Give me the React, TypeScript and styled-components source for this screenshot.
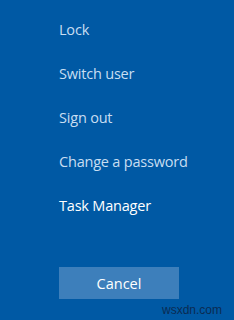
import React from "react";
import styled, { createGlobalStyle } from "styled-components";

const Global = createGlobalStyle`
  html, body { margin: 0; padding: 0; }
  body { background: #0059a4; width: 234px; height: 320px; overflow: hidden; }
`;

const Screen = styled.div`
  position: relative;
  width: 234px;
  height: 320px;
  background: #0059a4;
  font-family: "Open Sans", "Noto Sans", sans-serif;
  box-sizing: border-box;
  padding: 8px 0 0 59px;
  display: flex;
  flex-direction: column;
`;

const Menu = styled.div`
  display: flex;
  flex-direction: column;
`;

const Item = styled.div<{ $bright?: boolean }>`
  height: 44px;
  line-height: 44px;
  font-size: 14.5px;
  letter-spacing: -0.2px;
  color: ${(p) => (p.$bright ? "#ffffff" : "#c8def2")};
`;

const CancelButton = styled.button`
  margin-top: 39px;
  width: 120px;
  height: 32px;
  border: none;
  background: #3d7fbb;
  color: #ffffff;
  font-family: "Open Sans", "Noto Sans", sans-serif;
  font-size: 14.5px;
  padding: 0;
`;

const Watermark = styled.div`
  position: absolute;
  right: 12px;
  bottom: 3px;
  font-family: "Liberation Sans", Arial, sans-serif;
  font-size: 12px;
  color: #0b2b52;
`;

export default function App() {
  return (
    <>
      <Global />
      <Screen>
        <Menu>
          <Item>Lock</Item>
          <Item>Switch user</Item>
          <Item>Sign out</Item>
          <Item>Change a password</Item>
          <Item $bright>Task Manager</Item>
        </Menu>
        <CancelButton>Cancel</CancelButton>
        <Watermark>wsxdn.com</Watermark>
      </Screen>
    </>
  );
}
